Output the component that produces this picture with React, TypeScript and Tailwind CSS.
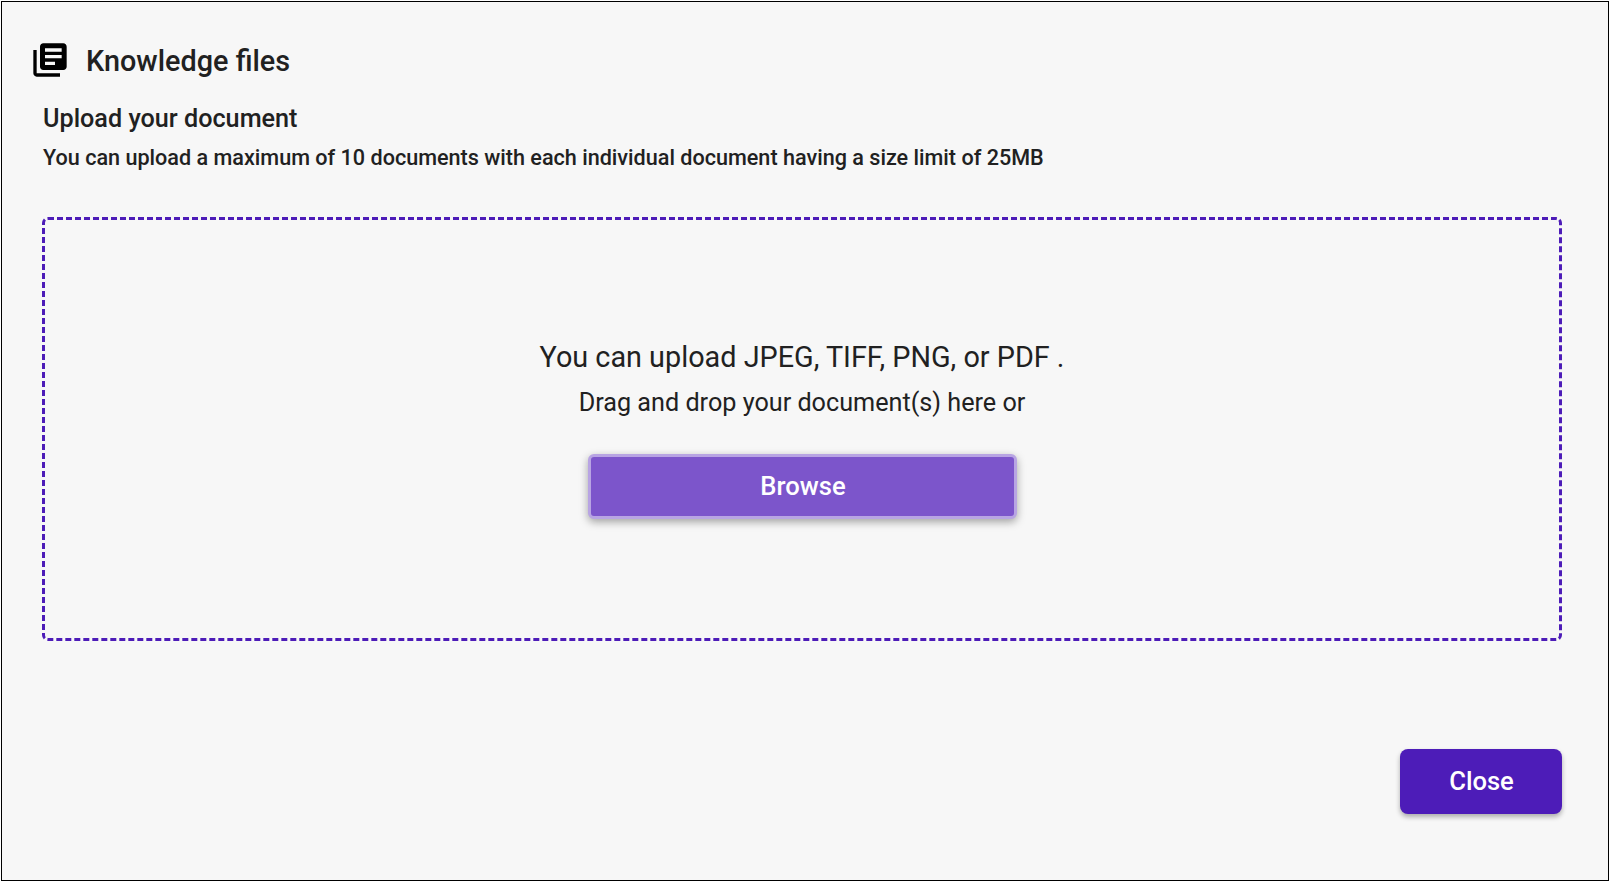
export default function App() {
  return (
    <div className="h-[882px] w-full bg-white p-px font-['Roboto',sans-serif] text-[#212121]">
      <div className="flex h-full w-full flex-col border border-black bg-[#f7f7f7] pl-[41px] pr-[46px]">
        <div className="-ml-[13px] mt-[38px] flex h-10 items-center gap-[16px]">
          <svg viewBox="0 0 24 24" className="h-10 w-10 shrink-0 fill-black">
            <path d="M4 6H2v14c0 1.1.9 2 2 2h14v-2H4V6zm16-4H8c-1.1 0-2 .9-2 2v12c0 1.1.9 2 2 2h12c1.1 0 2-.9 2-2V4c0-1.1-.9-2-2-2zm-1 9H9V9h10v2zm-4 4H9v-2h6v2zm4-8H9V5h10v2z" />
          </svg>
          <h1 className="pt-[2px] text-[28.8px] leading-10 font-medium">Knowledge files</h1>
        </div>
        <h2 className="mt-[23px] text-[25.2px] leading-8 font-medium">Upload your document</h2>
        <p className="mt-[11px] text-[21.6px] leading-6 font-medium">
          You can upload a maximum of 10 documents with each individual document having a size limit of 25MB
        </p>
        <div className="mt-[47px] -ml-px flex h-[424px] flex-col items-center rounded-[6px] border-[3px] border-dashed border-[#4d1cb8] pt-[117px]">
          <p className="text-[28.8px] leading-10">You can upload JPEG, TIFF, PNG, or PDF .</p>
          <p className="mt-[10px] text-[25.2px] leading-8">Drag and drop your document(s) here or</p>
          <button className="mt-[35px] h-[65px] w-[429px] rounded-[6px] border-[3px] border-[#b8a4e3] bg-[#7c55cb] pl-[2px] text-[25.6px] font-medium text-white shadow-[0_3px_8px_rgba(0,0,0,0.35)]">
            Browse
          </button>
        </div>
        <div className="mt-[108px] flex justify-end">
          <button className="h-[65px] w-[162px] rounded-[8px] bg-[#4d1cb8] pl-px text-[25.6px] font-medium text-white shadow-[0_3px_5px_rgba(0,0,0,0.3)]">
            Close
          </button>
        </div>
      </div>
    </div>
  );
}
